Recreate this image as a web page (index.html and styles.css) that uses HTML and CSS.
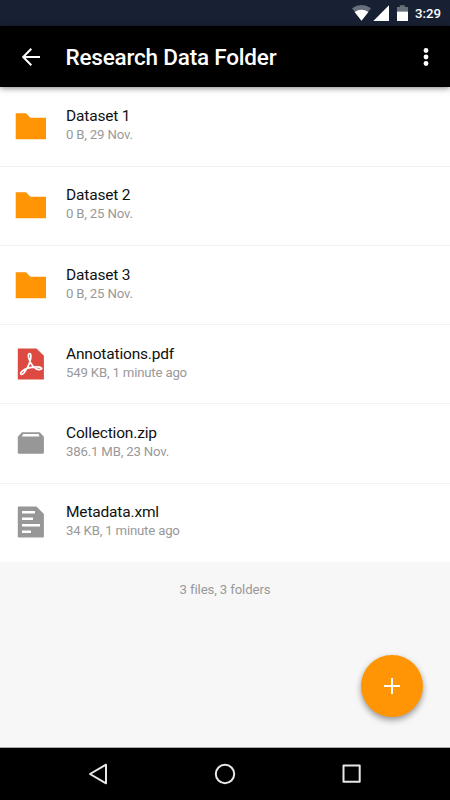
FILE: index.html
```html
<!DOCTYPE html>
<html lang="en">
<head>
<meta charset="utf-8">
<title>Research Data Folder</title>
<link rel="stylesheet" href="styles.css">
</head>
<body>
<div class="screen">
  <div class="status">
    <svg width="60" height="26" viewBox="0 0 60 26">
      <path d="M2 8.200Q11.500 1.800 21 8.200L11.500 20.500Z" fill="#69707b"/>
      <path d="M4.600 12Q11.500 7.700 18.400 12L11.500 20.800Z" fill="#fff"/>
      <path d="M23.300 21 39 5.200V21Z" fill="#fff"/>
      <path d="M47 7h2.800V5.200h5V7H58v4.500H47Z" fill="#69707b"/>
      <path d="M47 11.500h11V21H47Z" fill="#fff"/>
    </svg>
    <span class="time">3:29</span>
  </div>
  <header class="appbar">
    <svg class="back" width="20" height="20" viewBox="0 0 20 20" fill="none" stroke="#fff" stroke-width="2"><path d="M10.300 1.700 2.200 10l8.100 8.300M2.300 10H19"/></svg>
    <h1 class="title">Research Data Folder</h1>
    <svg class="more" width="6" height="20" viewBox="0 0 6 20" fill="#fff"><circle cx="3" cy="3.500" r="2.400"/><circle cx="3" cy="10" r="2.400"/><circle cx="3" cy="16.500" r="2.400"/></svg>
  </header>
  <main class="content">
    <ul class="list">
      <li class="row">
        <svg class="icon" width="32" height="32" viewBox="0 0 32 32"><path d="M.7 3.200H11l4.500 4.500H31v21.500H.7Z" fill="#ff9505"/></svg>
        <div class="text"><div class="name">Dataset 1</div><div class="meta">0 B, 29 Nov.</div></div>
      </li>
      <li class="row">
        <svg class="icon" width="32" height="32" viewBox="0 0 32 32"><path d="M.7 3.200H11l4.500 4.500H31v21.500H.7Z" fill="#ff9505"/></svg>
        <div class="text"><div class="name">Dataset 2</div><div class="meta">0 B, 25 Nov.</div></div>
      </li>
      <li class="row">
        <svg class="icon" width="32" height="32" viewBox="0 0 32 32"><path d="M.7 3.200H11l4.500 4.500H31v21.500H.7Z" fill="#ff9505"/></svg>
        <div class="text"><div class="name">Dataset 3</div><div class="meta">0 B, 25 Nov.</div></div>
      </li>
      <li class="row">
        <svg class="icon" width="32" height="32" viewBox="0 0 32 32">
          <path d="M2.800.6H21.500l7.400 7.200v23.600H2.800Z" fill="#dc4a41"/>
          <path d="M14.800 5.700C12.900 5.100 13.100 8.800 14.300 11.700C16 16.300 19.800 22 24.400 21.700C28.900 21.200 26 18.600 21.200 18.900C15.500 19.200 10.300 20.300 7.200 23.100C3.900 26.100 6.600 28.100 9.300 24.400C12.300 20.400 14.900 15.100 15.700 10.400C16.100 7.900 16.100 6 14.800 5.700Z" fill="none" stroke="#fff" stroke-width="1.700"/>
        </svg>
        <div class="text"><div class="name">Annotations.pdf</div><div class="meta">549 KB, 1 minute ago</div></div>
      </li>
      <li class="row">
        <svg class="icon" width="32" height="32" viewBox="0 0 32 32">
          <path d="M7 5.200H24.700L28.900 9.700V25.700Q28.900 26.700 27.900 26.700H3.800Q2.800 26.700 2.800 25.700V9.700Z" fill="#979797"/>
          <path d="M8.200 7H23.500L24.600 9.500H7Z" fill="#fff"/>
        </svg>
        <div class="text"><div class="name">Collection.zip</div><div class="meta">386.1 MB, 23 Nov.</div></div>
      </li>
      <li class="row">
        <svg class="icon" width="32" height="32" viewBox="0 0 32 32">
          <path d="M3.800.5H21.500l7.400 7.400v22.600q0 1-1 1H3.800q-1 0-1-1V1.500q0-1 1-1Z" fill="#979797"/>
          <path d="M7 6.200H20M7 12.700H18M7 19.200H25M7 25.700H16" stroke="#fff" stroke-width="2.400"/>
        </svg>
        <div class="text"><div class="name">Metadata.xml</div><div class="meta">34 KB, 1 minute ago</div></div>
      </li>
    </ul>
    <p class="summary">3 files, 3 folders</p>
    <button class="fab" aria-label="Add"><svg width="18" height="18" viewBox="0 0 18 18" stroke="#fff" stroke-width="2"><path d="M9 1v16M1 9h16"/></svg></button>
  </main>
  <nav class="navbar">
    <svg width="22" height="22" viewBox="0 0 22 22" fill="none" stroke="#e8e8e8" stroke-width="2" stroke-linejoin="round"><path d="M18 1.700V20.300L2 11Z"/></svg>
    <svg width="22" height="22" viewBox="0 0 22 22" fill="none" stroke="#e8e8e8" stroke-width="2"><circle cx="11" cy="11" r="9.200"/></svg>
    <svg width="22" height="22" viewBox="0 0 22 22" fill="none" stroke="#e8e8e8" stroke-width="2" stroke-linejoin="round"><path d="M2.500 2.500H18.700V18.700H2.500Z"/></svg>
  </nav>
</div>
</body>
</html>
```
FILE: styles.css
```css
* {
  box-sizing: border-box;
}

body {
  margin: 0;
  font-family: Roboto, sans-serif;
}

.screen {
  display: flex;
  flex-direction: column;
  width: 450px;
  height: 800px;
  overflow: hidden;
  background: #f7f7f7;
}

.status {
  display: flex;
  flex: none;
  justify-content: flex-end;
  height: 26px;
  padding-right: 9px;
  background: #182133;
  color: #fff;
}

.time {
  width: 26px;
  margin-left: 5px;
  font-size: 13.2px;
  font-weight: 500;
  line-height: 27px;
  white-space: nowrap;
}

.appbar {
  display: flex;
  flex: none;
  align-items: center;
  height: 61px;
  padding: 0 21px;
  background: #000;
  color: #fff;
  box-shadow: 0 1px 6px rgba(0, 0, 0, .5);
  z-index: 1;
}

.title {
  flex: 1;
  margin: 1px 0 0 24.500px;
  font-size: 22.500px;
  font-weight: 500;
  letter-spacing: -.2px;
  line-height: 28px;
}

.content {
  position: relative;
  flex: 1;
}

.list {
  margin: 0;
  padding: .6px 0 0;
  list-style: none;
  background: #fff;
}

.row {
  display: flex;
  align-items: center;
  height: 79.200px;
  padding: 0 0 1px 15px;
  border-bottom: 1px solid #f2f2f2;
}

.row:last-child {
  height: 78.400px;
  border-bottom: 0;
}

.icon {
  flex: none;
}

.text {
  margin: -3px 0 0 19px;
}

.name {
  color: #111;
  font-size: 15.500px;
  letter-spacing: -.18px;
  line-height: 20px;
}

.meta {
  color: #999;
  font-size: 13.200px;
  letter-spacing: -.18px;
  line-height: 17px;
}

.summary {
  margin: 19px 0 0;
  color: #999;
  font-size: 13.200px;
  letter-spacing: -.12px;
  line-height: 17px;
  text-align: center;
}

.fab {
  position: absolute;
  right: 27px;
  bottom: 30px;
  display: flex;
  align-items: center;
  justify-content: center;
  width: 62px;
  height: 62px;
  padding: 0;
  border: 0;
  border-radius: 50%;
  background: #ff9505;
  box-shadow: 0 3px 6px rgba(0, 0, 0, .4);
}

.navbar {
  display: flex;
  flex: none;
  align-items: center;
  justify-content: space-between;
  height: 53px;
  padding: 0 87.500px;
  border-top: 1px solid #aaa;
  background: #000;
}
```
